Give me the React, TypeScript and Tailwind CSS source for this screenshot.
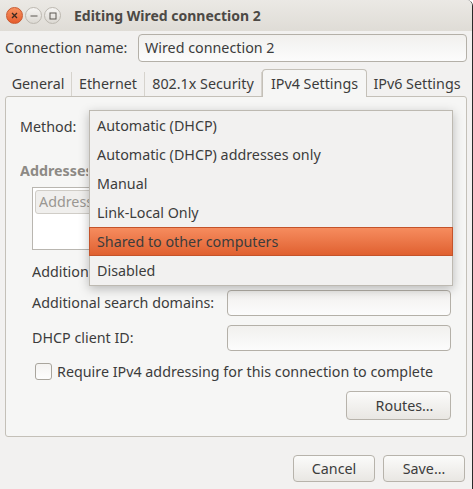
import React from 'react';

const menuItems = [
  'Automatic (DHCP)',
  'Automatic (DHCP) addresses only',
  'Manual',
  'Link-Local Only',
  'Shared to other computers',
  'Disabled',
];

const tabs = [
  { label: 'General', w: 'w-[67px]' },
  { label: 'Ethernet', w: 'w-[73px]' },
  { label: '802.1x Security', w: 'w-[117px]' },
  { label: 'IPv4 Settings', w: 'w-[105px]' },
  { label: 'IPv6 Settings', w: 'w-[100px]' },
];

function TitleButton({ kind }: { kind: 'close' | 'min' | 'max' }) {
  if (kind === 'close') {
    return (
      <div className="w-[17px] h-[17px] rounded-full bg-gradient-to-b from-[#f7915f] to-[#e55b2b] border border-[#c9582e] flex items-center justify-center">
        <svg width="7" height="7" viewBox="0 0 7 7">
          <path d="M1 1 L6 6 M6 1 L1 6" stroke="#3c2a20" strokeWidth="1.3" />
        </svg>
      </div>
    );
  }
  return (
    <div className="w-[17px] h-[17px] rounded-full bg-gradient-to-b from-[#f6f5f3] to-[#dcd9d3] border border-[#bcb8b0] flex items-center justify-center">
      {kind === 'min' ? (
        <svg width="8" height="8" viewBox="0 0 8 8">
          <path d="M0.5 4 L7.5 4" stroke="#5a5650" strokeWidth="1" />
        </svg>
      ) : (
        <svg width="8" height="8" viewBox="0 0 8 8">
          <rect x="1" y="1" width="6" height="6" fill="none" stroke="#5a5650" strokeWidth="1" />
        </svg>
      )}
    </div>
  );
}

function TextBox({ className, value }: { className: string; value?: string }) {
  return (
    <div
      className={`rounded-[4px] border border-[#b4b0a8] bg-gradient-to-b from-[#f1f0ee] to-[#fcfcfc] flex items-center px-[6px] ${className}`}
    >
      {value}
    </div>
  );
}

function Btn({ label, className }: { label: string; className: string }) {
  return (
    <div
      className={`rounded-[4px] border border-[#b7b3ab] bg-gradient-to-b from-[#fbfbfa] to-[#e9e7e3] flex items-center justify-center ${className}`}
    >
      {label}
    </div>
  );
}

export default function App() {
  return (
    <div
      className="w-[473px] h-[489px] bg-[#f2f1f0] text-[#3c3c3c] text-[14.3px] relative overflow-hidden rounded-tr-[6px] border-r border-[#2a2a2a] flex flex-col whitespace-nowrap"
      style={{ fontFamily: '"Noto Sans", "DejaVu Sans", sans-serif' }}
    >
      {/* Title bar */}
      <div className="h-[31px] shrink-0 bg-gradient-to-b from-[#ebe9e5] to-[#dfdcd6] flex items-center pl-[6px]">
        <div className="flex gap-[2px]">
          <TitleButton kind="close" />
          <TitleButton kind="min" />
          <TitleButton kind="max" />
        </div>
        <div className="ml-[13px] font-bold text-[#4c4945] text-[14px]">Editing Wired connection 2</div>
      </div>

      {/* Connection name */}
      <div className="flex items-center pl-[5px] pr-[5px] mt-[3px] h-[28px]">
        <span>Connection name:</span>
        <TextBox className="ml-auto w-[329px] h-[28px]" value="Wired connection 2" />
      </div>

      {/* Tabs */}
      <div className="flex items-end mt-[6px] px-[5px] h-[28px]">
        {tabs.map((t) =>
          t.label === 'IPv4 Settings' ? (
            <div
              key={t.label}
              className={`${t.w} h-[28px] flex items-center justify-center border border-b-0 border-[#c4c0b8] rounded-t-[4px] bg-[#f6f6f5] relative top-[1px] z-10`}
            >
              {t.label}
            </div>
          ) : (
            <div
              key={t.label}
              className={`${t.w} h-[24px] flex items-center justify-center border-r border-[#d6d3cd] last:border-r-0`}
            >
              {t.label}
            </div>
          ),
        )}
      </div>

      {/* Notebook */}
      <div className="mx-[5px] h-[341px] border border-[#c4c0b8] rounded-[3px] bg-[#f6f6f5] flex flex-col pl-[14px] pr-[15px]">
        <div className="mt-[20px] h-[20px] flex items-center">Method:</div>
        <div className="mt-[24px] h-[20px] w-[68px] overflow-hidden flex items-center font-bold text-[#8d8a85]">
          Addresses
        </div>
        <div className="mt-[6px] ml-[12px] h-[63px] w-[300px] border border-[#b9b6b0] bg-white p-[2px]">
          <div className="h-[24px] w-[80px] border border-[#d0cdc7] rounded-[3px] bg-[#f0efed] text-[#9a9792] flex items-center pl-[3px]">
            <span className="w-[50px] overflow-hidden">Address</span>
          </div>
        </div>
        <div className="mt-[12px] ml-[12px] h-[20px] w-[56px] overflow-hidden flex items-center">
          Additional DNS servers:
        </div>
        <div className="mt-[8px] ml-[12px] flex items-center h-[26px]">
          <span>Additional search domains:</span>
          <TextBox className="ml-auto w-[224px] h-[26px]" />
        </div>
        <div className="mt-[9px] ml-[12px] flex items-center h-[26px]">
          <span>DHCP client ID:</span>
          <TextBox className="ml-auto w-[224px] h-[26px]" />
        </div>
        <div className="mt-[12px] ml-[15px] flex items-center h-[17px]">
          <div className="w-[17px] h-[17px] rounded-[3px] border border-[#a9a59d] bg-gradient-to-b from-[#f4f3f1] to-[#fdfdfd]" />
          <span className="ml-[5px]">Require IPv4 addressing for this connection to complete</span>
        </div>
        <div className="mt-[11px] flex justify-end">
          <Btn label="Routes…" className="w-[105px] h-[29px] pl-[12px]" />
        </div>
      </div>

      {/* Dialog buttons */}
      <div className="mt-[18px] flex justify-end gap-[8px] pr-[7px]">
        <Btn label="Cancel" className="w-[82px] h-[27px]" />
        <Btn label="Save…" className="w-[82px] h-[27px]" />
      </div>

      {/* Method dropdown menu */}
      <div className="absolute left-[89px] top-[110px] w-[364px] border border-[#bdb9b1] bg-[#f2f1f0] shadow-[0_3px_10px_rgba(0,0,0,0.25)] z-20">
        {menuItems.map((m) =>
          m === 'Shared to other computers' ? (
            <div
              key={m}
              className="h-[29px] flex items-center pl-[7px] bg-gradient-to-b from-[#f68c5e] to-[#e0602f] border border-[#c4532a] -mx-[1px]"
            >
              {m}
            </div>
          ) : (
            <div key={m} className="h-[29px] flex items-center pl-[7px]">
              {m}
            </div>
          ),
        )}
      </div>
    </div>
  );
}
